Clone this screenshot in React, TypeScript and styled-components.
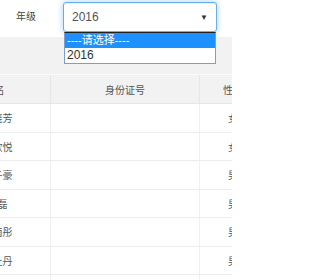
import React from "react";
import styled, { createGlobalStyle } from "styled-components";

const Global = createGlobalStyle`
  html, body { margin: 0; padding: 0; background: #fff; overflow: hidden; }
  body { font-family: "Liberation Sans", "Noto Sans CJK SC", sans-serif; width: 234px; }
`;

const Page = styled.div`
  width: 232px;
  height: 280px;
  overflow: hidden;
  position: relative;
`;

const FormRow = styled.div`
  display: flex;
  align-items: center;
  padding: 2px 0 0 16px;
  height: 30px;
  margin-bottom: 5px;
  position: relative;
  z-index: 2;
`;

const Label = styled.div`
  width: 47px;
  font-family: "Noto Sans CJK SC", sans-serif;
  font-size: 10px;
  color: #444;
  line-height: 1;
  margin-top: -2px;
`;

const SelectWrap = styled.div`
  position: relative;
  width: 154px;
  height: 30px;
`;

const SelectBox = styled.div`
  box-sizing: border-box;
  width: 100%;
  height: 100%;
  border: 1px solid #66afe9;
  border-radius: 3px;
  box-shadow: inset 0 1px 1px rgba(0, 0, 0, 0.075), 0 0 6px rgba(102, 175, 233, 0.6);
  display: flex;
  align-items: center;
  justify-content: space-between;
  padding: 0 8px 0 8px;
  font-size: 12px;
  color: #555;
  background: #fff;
`;

const Caret = styled.span`
  font-size: 8px;
  color: #333;
  margin-top: 1px;
`;

const Menu = styled.div`
  position: absolute;
  left: 1px;
  right: 1px;
  top: 30px;
  box-sizing: border-box;
  border: 1px solid #7f9dc9;
  border-top: 1px solid #222;
  background: #fff;
`;

const Option = styled.div<{ $active?: boolean }>`
  height: 15px;
  line-height: 15px;
  padding-left: 2px;
  font-size: ${(p) => (p.$active ? "11px" : "12px")};
  font-family: "Liberation Sans", "Noto Sans CJK SC", sans-serif;
  background: ${(p) => (p.$active ? "#1e90ff" : "#fff")};
  color: ${(p) => (p.$active ? "#fff" : "#333")};
`;

const Toolbar = styled.div`
  height: 37px;
  background: #f2f2f2;
  border-bottom: 1px solid #fbfbfb;
`;

const Grid = styled.div`
  margin-left: -55px;
  width: 321px;
`;

const Row = styled.div<{ $head?: boolean }>`
  display: grid;
  grid-template-columns: 106px 149px 66px;
  box-sizing: border-box;
  height: ${(p) => (p.$head ? "29px" : "28.5px")};
  background: ${(p) => (p.$head ? "#f2f2f2" : "#fff")};
  border-bottom: 1px solid ${(p) => (p.$head ? "#e6e6e6" : "#ececec")};
`;

const Cell = styled.div<{ $head?: boolean }>`
  display: flex;
  align-items: center;
  justify-content: center;
  font-family: "Noto Sans CJK SC", sans-serif;
  font-size: 10px;
  color: #555;
  border-right: 1px solid ${(p) => (p.$head ? "#e6e6e6" : "#f0f0f0")};
  white-space: nowrap;
  &:first-child { padding-right: ${(p) => (p.$head ? "6px" : "0")}; }
  &:last-child { border-right: none; }
`;

const rows = [
  { name: "王晓芳", sex: "女" },
  { name: "李欣悦", sex: "女" },
  { name: "张子豪", sex: "男" },
  { name: "刘磊", sex: "男" },
  { name: "陈雨彤", sex: "男" },
  { name: "赵牡丹", sex: "男" },
  { name: "孙浩", sex: "男" },
];

export default function App() {
  return (
    <Page>
      <Global />
      <FormRow>
        <Label>年级</Label>
        <SelectWrap>
          <SelectBox>
            <span>2016</span>
            <Caret>▼</Caret>
          </SelectBox>
          <Menu>
            <Option $active>----请选择----</Option>
            <Option>2016</Option>
          </Menu>
        </SelectWrap>
      </FormRow>
      <Toolbar />
      <Grid>
        <Row $head>
          <Cell $head>姓名</Cell>
          <Cell $head>身份证号</Cell>
          <Cell $head>性别</Cell>
        </Row>
        {rows.map((r) => (
          <Row key={r.name}>
            <Cell>{r.name}</Cell>
            <Cell></Cell>
            <Cell>{r.sex}</Cell>
          </Row>
        ))}
      </Grid>
    </Page>
  );
}
